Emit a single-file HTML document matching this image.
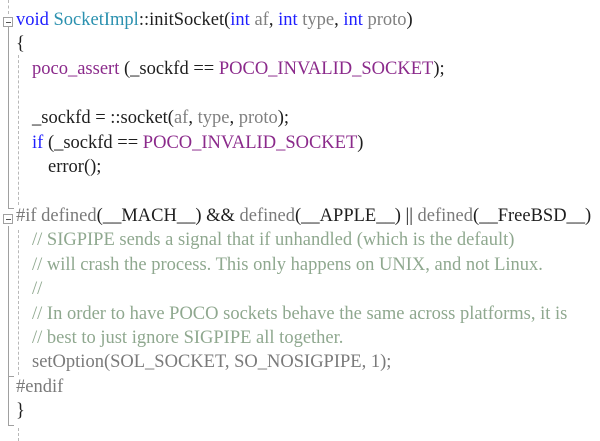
<!DOCTYPE html>
<html><head><style>
body{margin:0;width:600px;height:441px;background:#fff;overflow:hidden;position:relative;font-family:"Liberation Serif","DejaVu Serif",serif;font-size:18.5px;color:#1e1e1e}
.l{position:absolute;white-space:pre;line-height:24px;height:24px;font-family:"Liberation Serif","DejaVu Serif",serif}
.k{color:#1f1fff}.t{color:#2b91af}.m{color:#8b2a8b}.p{color:#808080}.c{color:#8fa88f}.g{color:#7a7a7a}
.vl{position:absolute;left:8px;width:1px;background:#a0a0a0}
.dl{position:absolute;width:0;border-left:1px dashed #b8b8b8}
.fb{position:absolute;left:3px;width:8px;height:8px;border:1px solid #a0a0a0;background:#fff}
.fb:after{content:"";position:absolute;left:2px;top:4px;width:5px;height:1px;background:#555}
</style></head><body>
<div class="dl" style="left:8px;top:0;height:14px"></div>
<div class="vl" style="top:26px;height:182px"></div>
<div class="dl" style="left:18px;top:55px;height:150px"></div>
<div class="vl" style="top:208px;height:1px;width:6px"></div>
<div class="vl" style="top:226px;height:200px"></div>
<div class="dl" style="left:18px;top:230px;height:145px"></div>
<div class="vl" style="top:376px;height:1px;width:6px"></div>
<div class="vl" style="top:425px;height:1px;width:6px"></div>
<div class="dl" style="left:18px;top:428px;height:13px"></div>
<div class="fb" style="top:17px"></div>
<div class="fb" style="top:214px"></div>
<div class="l" style="left:16px;top:8px"><span class="k">void</span> <span class="t">SocketImpl</span>::initSocket(<span class="k">int</span> <span class="p">af</span>, <span class="k">int</span> <span class="p">type</span>, <span class="k">int</span> <span class="p">proto</span>)</div>
<div class="l" style="left:16px;top:32px">{</div>
<div class="l" style="left:32px;top:57px"><span class="m">poco_assert</span> (_sockfd == <span class="m">POCO_INVALID_SOCKET</span>);</div>
<div class="l" style="left:32px;top:106px">_sockfd = ::socket(<span class="p">af</span>, <span class="p">type</span>, <span class="p">proto</span>);</div>
<div class="l" style="left:32px;top:131px"><span class="k">if</span> (_sockfd == <span class="m">POCO_INVALID_SOCKET</span>)</div>
<div class="l" style="left:48px;top:155px">error();</div>
<div class="l" style="left:16px;top:204px"><span class="g">#if defined</span>(__MACH__) &amp;&amp; <span class="g">defined</span>(__APPLE__) || <span class="g">defined</span>(__FreeBSD__)</div>
<div class="l c" style="left:32px;top:228px">// SIGPIPE sends a signal that if unhandled (which is the default)</div>
<div class="l c" style="left:32px;top:253px">// will crash the process. This only happens on UNIX, and not Linux.</div>
<div class="l c" style="left:32px;top:277px">//</div>
<div class="l c" style="left:32px;top:302px">// In order to have POCO sockets behave the same across platforms, it is</div>
<div class="l c" style="left:32px;top:326px">// best to just ignore SIGPIPE all together.</div>
<div class="l g" style="left:32px;top:350px">setOption(SOL_SOCKET, SO_NOSIGPIPE, 1);</div>
<div class="l g" style="left:16px;top:375px">#endif</div>
<div class="l" style="left:16px;top:399px">}</div>
</body></html>
